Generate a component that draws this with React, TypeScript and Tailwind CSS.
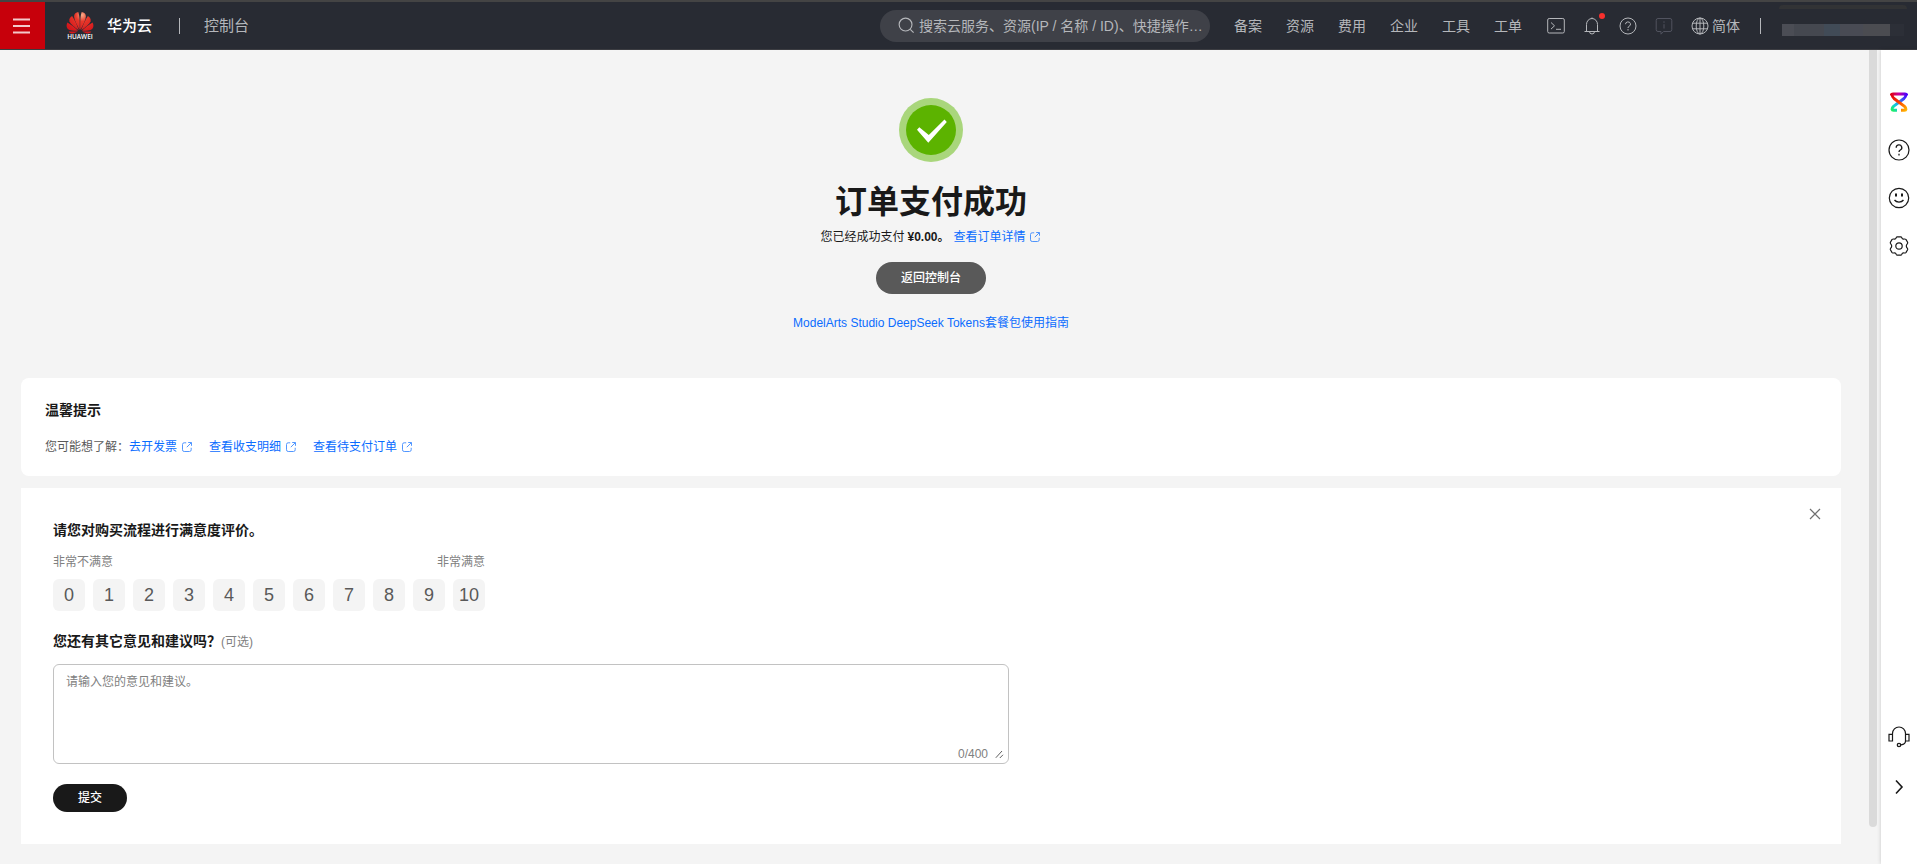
import type { ReactNode } from 'react';

const navItems = ['备案', '资源', '费用', '企业', '工具', '工单'];
const helpLinks = ['去开发票', '查看收支明细', '查看待支付订单'];
const scores = [0, 1, 2, 3, 4, 5, 6, 7, 8, 9, 10];

function Icon({
  size,
  box = 18,
  className = '',
  children,
}: {
  size: number;
  box?: number;
  className?: string;
  children: ReactNode;
}) {
  return (
    <svg
      width={size}
      height={size}
      viewBox={`0 0 ${box} ${box}`}
      fill="none"
      stroke="currentColor"
      className={`shrink-0 ${className}`}
    >
      {children}
    </svg>
  );
}

function ExternalIcon() {
  return (
    <Icon size={10} box={10} className="opacity-70">
      <path d="M4.200 .8H2.200A1.700 1.700 0 0 0 .5 2.500v5.300a1.700 1.700 0 0 0 1.700 1.700h5.300a1.700 1.700 0 0 0 1.700-1.700V5.800M6.200.5h3.300v3.300M9.300.7 4.800 5.200" />
    </Icon>
  );
}

function HuaweiLogo() {
  return (
    <svg width="28" height="28" viewBox="0 0 28 28" className="shrink-0">
      <defs>
        <radialGradient
          id="petal"
          gradientUnits="userSpaceOnUse"
          cx="16"
          cy="3"
          r="18"
        >
          <stop offset="0" stopColor="#f9b08c" />
          <stop offset=".35" stopColor="#e8392b" />
          <stop offset="1" stopColor="#d5161b" />
        </radialGradient>
      </defs>
      <g fill="url(#petal)">
        <path d="M13.3 17.4C10.5 12 8.2 7.800 8.100 4.200 8.200 1.900 10 .5 12.300.1c1.300 3.500 1.700 10 1.400 17.300z" />
        <path d="M14.700 17.400C17.500 12 19.800 7.800 19.900 4.200 19.800 1.900 18 .5 15.700.1c-1.300 3.500-1.700 10-1.400 17.300z" />
        <path d="M12.500 17.900C8.800 15.300 4.300 12 3.400 9.200c-.5-2.400.7-4.200 2.700-5.300 2.400 3.400 5 9 6.600 13.900z" />
        <path d="M15.500 17.900c3.700-2.600 8.200-5.900 9.100-8.700.5-2.400-.7-4.200-2.700-5.300-2.400 3.400-5 9-6.600 13.900z" />
        <path d="M11.900 18.800C7.600 18.800 3.500 18.600 1.800 17 .3 15.200.2 12.600 1.400 10.400c3.600 1.900 7.900 5.200 10.600 8.300z" />
        <path d="M16.100 18.800c4.300 0 8.400-.2 10.100-1.800 1.500-1.800 1.600-4.400.4-6.600-3.600 1.900-7.900 5.200-10.600 8.300z" />
        <path d="M11.500 19.600H2.700c1 2 3.100 2.300 4.900 1.700 1.500-.5 2.800-1.100 3.900-1.600z" />
        <path d="M16.500 19.600h8.800c-1 2-3.100 2.300-4.900 1.700-1.500-.5-2.800-1.100-3.900-1.600z" />
      </g>
      <text
        x="14"
        y="27"
        textAnchor="middle"
        textLength="25.500"
        lengthAdjust="spacingAndGlyphs"
        fontFamily="'Open Sans', sans-serif"
        fontWeight="600"
        fontSize="6.500"
        fill="#fff"
      >
        HUAWEI
      </text>
    </svg>
  );
}

function Header() {
  return (
    <header className="flex h-[50px] items-center border-t-2 border-b border-t-[#444444] border-b-[#3c3d42] bg-[#282b33] text-sm text-[#b5b7bb]">
      <button className="flex h-[47px] w-[45px] items-center justify-center bg-[#c7000b]">
        <svg width="17" height="16" viewBox="0 0 17 16" className="mr-[3px]">
          <path d="M0 1.500h17M0 8h17M0 14.500h17" stroke="#f3c9cb" strokeWidth="2" />
        </svg>
      </button>
      <div className="ml-[21px] flex items-center">
        <HuaweiLogo />
        <span className="ml-[13px] text-[15px] font-medium text-white">华为云</span>
        <span className="ml-[27px] h-4 w-px bg-[#b5b7bb]" />
        <span className="ml-6 text-[15px]">控制台</span>
      </div>
      <div className="ml-auto flex items-center">
        <div className="flex h-8 w-[330px] items-center rounded-full bg-[#3f4148] pl-[18px]">
          <Icon size={17}>
            <circle cx="8" cy="8" r="6.800" strokeWidth="1.200" />
            <path d="m13 13 3.500 3.500" strokeWidth="1.200" />
          </Icon>
          <span className="ml-1 whitespace-nowrap">
            搜索云服务、资源(IP / 名称 / ID)、快捷操作…
          </span>
        </div>
        <nav className="ml-6 flex gap-6">
          {navItems.map((item) => (
            <a key={item}>{item}</a>
          ))}
        </nav>
        <div className="ml-[25px] flex items-center gap-[18px]">
          <Icon size={18}>
            <rect x=".7" y="1.500" width="16.600" height="14.500" rx="1.500" />
            <path d="m4 5.500 3.500 3.300L4 12.100M9 12.300h5" />
          </Icon>
          <span className="relative">
            <Icon size={18}>
              <path d="M1.500 14.500h15M3.500 14.500V7.500a5.500 6 0 0 1 11 0v7M6.500 14.500a2.500 2.500 0 0 0 5 0" />
              <path d="M9 .5v1" />
            </Icon>
            <span className="absolute -top-[4px] right-[-4px] size-1.5 rounded-full bg-[#f8302d]" />
          </span>
          <Icon size={18}>
            <circle cx="9" cy="9" r="8" />
            <path d="M6.500 7.200a2.500 2.300 0 1 1 3.500 2.100c-.7.400-1 .8-1 1.700M9 12v1.500" />
          </Icon>
          <Icon size={18} className="text-[#51535f]">
            <path d="M3 1.500h12A1.800 1.800 0 0 1 16.800 3.300v9.400A1.800 1.800 0 0 1 15 14.500H8.500L6 17.200v-2.700H3a1.800 1.800 0 0 1-1.800-1.800V3.300A1.800 1.800 0 0 1 3 1.500zM9 4.300v1.500M9 7.200v4.300" />
          </Icon>
          <span className="flex items-center gap-[3px]">
            <Icon size={18}>
              <circle cx="9" cy="9" r="8" />
              <ellipse cx="9" cy="9" rx="3.800" ry="8" />
              <path d="M9 1v16M1.500 6.200h15M1.500 11.800h15" />
            </Icon>
            简体
          </span>
        </div>
        <span className="ml-5 h-4 w-px bg-[#b5b7bb]" />
        {/* masked account name */}
        <div className="ml-[6px] w-[150px]">
          <div className="-mt-[11px] ml-3 h-1 w-[128px] rounded-t-full bg-[#323335]" />
          <div className="mt-[15px] ml-[15px] flex h-3 w-[122px]">
            <span className="w-3 bg-[#4b4d55]" />
            <span className="w-[30px] bg-[#454850]" />
            <span className="w-4 bg-[#414b57]" />
            <span className="w-[23px] bg-[#494b54]" />
            <span className="w-[27px] bg-[#4b4c51]" />
            <span className="flex-1 bg-[#2c2f37]" />
          </div>
        </div>
      </div>
    </header>
  );
}

function PayResult() {
  return (
    <section className="flex flex-col items-center pt-12 text-xs text-[#191919]">
      <svg width="64" height="64" viewBox="0 0 64 64">
        <circle cx="32" cy="32" r="32" fill="#a9d67c" />
        <circle cx="32" cy="32" r="25" fill="#5cb300" />
        <path
          d="M20.300 29.300 18 31.800l11.300 13L47.800 24l-2.300-2.500L29.800 37z"
          fill="#fff"
        />
      </svg>
      <h1 className="mt-4 text-[32px] leading-12 font-bold">订单支付成功</h1>
      <p className="mt-px mr-[2px] flex h-5 items-center">
        您已经成功支付<b className="ml-[3px]">¥0.00。</b>
        <a className="ml-1 flex items-center gap-1 text-[#0a6cff]">
          查看订单详情
          <ExternalIcon />
        </a>
      </p>
      <button className="mt-[15px] h-8 w-[110px] rounded-full bg-[#595959] font-medium text-white">
        返回控制台
      </button>
      <a className="mt-[19px] leading-5 text-[#0a6cff]">
        ModelArts Studio DeepSeek Tokens套餐包使用指南
      </a>
    </section>
  );
}

function Tips() {
  return (
    <section className="mt-[45px] h-[98px] rounded-lg bg-white px-6 pt-[22px]">
      <h2 className="text-sm leading-5 font-bold">温馨提示</h2>
      <div className="mt-[17px] flex h-5 items-center text-xs text-[#595959]">
        您可能想了解：
        <div className="flex gap-[17px]">
          {helpLinks.map((link) => (
            <a key={link} className="flex items-center gap-[5px] text-[#0a6cff]">
              {link}
              <ExternalIcon />
            </a>
          ))}
        </div>
      </div>
    </section>
  );
}

function Survey() {
  return (
    <section className="mt-3 flex h-[356px] justify-between bg-white pt-8 pl-8">
      <div className="w-[956px]">
        <h2 className="text-sm leading-5 font-bold">请您对购买流程进行满意度评价。</h2>
        <div className="mt-3 flex w-[432px] justify-between text-xs leading-5 text-[#808080]">
          <span>非常不满意</span>
          <span>非常满意</span>
        </div>
        <div className="mt-[7px] flex gap-2">
          {scores.map((score) => (
            <button
              key={score}
              className="size-8 rounded-md bg-[#f4f4f4] text-lg text-[#595959]"
            >
              {score}
            </button>
          ))}
        </div>
        <h2 className="mt-5 flex h-5 items-center text-sm font-bold">
          您还有其它意见和建议吗？
          <span className="pt-px text-xs font-normal text-[#808080]">(可选)</span>
        </h2>
        <div className="mt-[13px] flex h-[100px] flex-col justify-between rounded-md border border-[#c2c2c2] pt-[7px] pr-1 pl-3 text-xs text-[#808080]">
          <span className="leading-5">请输入您的意见和建议。</span>
          <div className="flex h-[18px] items-end justify-end gap-[7px]">
            <span className="leading-[17px]">0/400</span>
            <svg width="9" height="9" viewBox="0 0 9 9" className="mb-1">
              <path d="M.8 7.800 7 1M4.800 8 8 4.800" stroke="#606060" strokeWidth="1" />
            </svg>
          </div>
        </div>
        <button className="mt-5 block h-7 w-[74px] rounded-full bg-[#191919] text-xs font-medium text-white">
          提交
        </button>
      </div>
      <Icon size={12} box={12} className="mt-[-12px] mr-5 text-[#707070]">
        <path d="m1 1 10 10M11 1 1 11" strokeWidth="1.200" />
      </Icon>
    </section>
  );
}

function SideBar() {
  return (
    <aside className="flex w-9 flex-col items-center bg-white pt-[42px] text-[#191919] shadow-[0_0_4px_rgba(0,0,0,0.18)]">
      <svg width="18" height="20" viewBox="0 0 18 20" fill="none" strokeWidth="2.900">
        <defs>
          <linearGradient id="top" x1="0" x2="1">
            <stop offset="0" stopColor="#e00010" />
            <stop offset=".5" stopColor="#c800a0" />
            <stop offset="1" stopColor="#4a00ff" />
          </linearGradient>
          <linearGradient id="cold" x1="1" y1="0" x2="0" y2="1">
            <stop offset="0" stopColor="#4a00ff" />
            <stop offset=".5" stopColor="#2f8cf0" />
            <stop offset=".75" stopColor="#10cfd8" />
            <stop offset="1" stopColor="#1fee60" />
          </linearGradient>
          <linearGradient id="warm" x1="0" y1="0" x2="1" y2="1">
            <stop offset="0" stopColor="#e00010" />
            <stop offset=".55" stopColor="#ff4a00" />
            <stop offset="1" stopColor="#ffb400" />
          </linearGradient>
        </defs>
        <path
          d="M15.800 2.500Q16 4.800 14 6.500L3.500 14.300Q1.800 15.800 2 17.200 2.200 18.200 3.500 18.200H7"
          stroke="url(#cold)"
        />
        <path
          d="M2.200 2.500Q2 4.800 4 6.500L14.500 14.300Q16.200 15.800 16 17.200 15.800 18.200 14.500 18.200H11"
          stroke="url(#warm)"
        />
        <path d="M1.200 3.500Q1.200 2 3 2h12Q16.800 2 16.800 3.500" stroke="url(#top)" />
      </svg>
      <Icon size={22} box={22} className="mt-[27px]">
        <circle cx="11" cy="11" r="10" strokeWidth="1.200" />
        <path
          d="M8.200 8.800A2.800 2.700 0 1 1 12.300 11c-.9.500-1.300 1-1.300 2M11 14.800v1.600"
          strokeWidth="1.300"
        />
      </Icon>
      <Icon size={22} box={22} className="mt-[26px]">
        <circle cx="11" cy="11" r="9.700" strokeWidth="1.200" />
        <path d="M8 6.500v3M14 6.500v3" strokeWidth="2" />
        <path d="M6.500 13c2 2.700 7 2.700 9 0" strokeWidth="1.300" />
      </Icon>
      <Icon size={22} box={22} className="mt-[26px]">
        <circle cx="11" cy="11" r="3.200" strokeWidth="1.200" />
        <path
          d="M9.300 1.900h3.400q.7 0 1 .7.500 1.500 1.800 1.500 1.700-.3 2.400.3l1.700 2.900q.3.700-.2 1.300-1.100 1.200-1.100 2.400t1.100 2.400q.5.600.2 1.300l-1.700 2.900q-.7.600-2.400.3-1.300 0-1.800 1.500-.3.700-1 .7H9.300q-.7 0-1-.7-.5-1.500-1.800-1.500-1.700.3-2.400-.3l-1.700-2.900q-.3-.7.200-1.300 1.100-1.200 1.100-2.400T2.600 8.600q-.5-.6-.2-1.300l1.700-2.900q.7-.6 2.400-.3 1.300 0 1.800-1.500.3-.7 1-.7z"
          strokeWidth="1.200"
          strokeLinejoin="round"
        />
      </Icon>
      <Icon size={22} box={22} className="mt-auto">
        <path
          d="M1 8.300h3.500v6.700H1zM17.500 8.300H21v6.700h-3.500zM4.500 8.300V7.500a6.500 6.500 0 0 1 13 0v.8M17.500 15c0 2-1.500 3.500-4.500 3.800"
          strokeWidth="1.200"
        />
        <circle cx="11" cy="19" r="1.700" strokeWidth="1.300" />
      </Icon>
      <Icon size={16} box={16} className="mt-[31px] mb-[69px]">
        <path d="m5 1.500 6 6.500-6 6.500" strokeWidth="1.600" />
      </Icon>
    </aside>
  );
}

export default function App() {
  return (
    <div className="h-screen overflow-hidden bg-[#f4f4f4] font-['Liberation_Sans','Noto_Sans_CJK_SC',sans-serif] text-[#191919]">
      <Header />
      <div className="flex h-[814px]">
        <main className="w-[1869px] shrink-0 pr-7 pl-[21px]">
          <PayResult />
          <Tips />
          <Survey />
        </main>
        {/* scroll thumb */}
        <div className="mr-1 h-[777px] w-2 shrink-0 rounded-b-full bg-[#dadada]" />
        <SideBar />
      </div>
    </div>
  );
}
